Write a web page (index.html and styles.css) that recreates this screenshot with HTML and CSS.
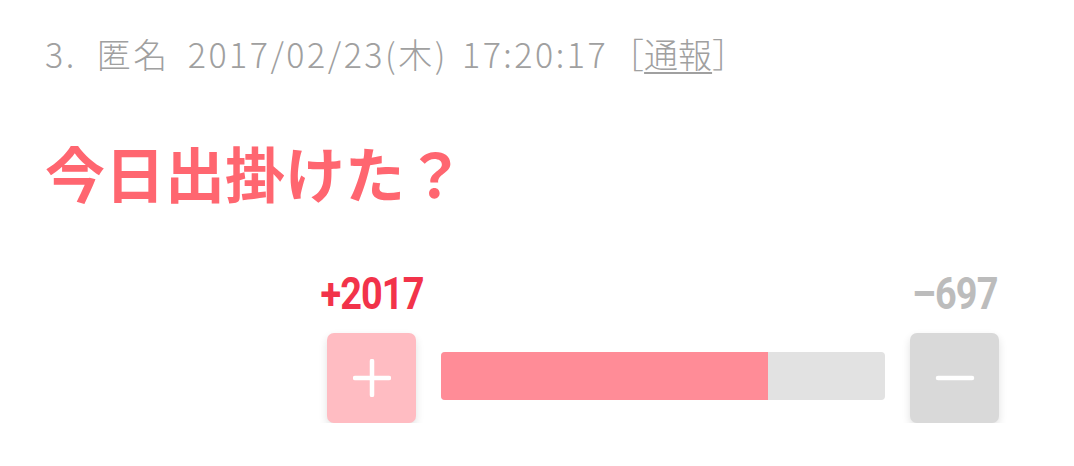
FILE: index.html
```html
<!DOCTYPE html>
<html lang="ja">
<head>
<meta charset="utf-8">
<link rel="stylesheet" href="styles.css">
</head>
<body>
<div class="post">
  <div class="meta">
    <span class="num">3.</span>
    <span class="name">匿名</span>
    <span class="date">2017/02/23(木)</span>
    <span class="time">17:20:17</span>
    <span class="report">［<span class="report-link">通報</span>］</span>
  </div>
  <h1 class="title">今日出掛けた？</h1>
  <div class="vote">
    <div class="vote-side">
      <div class="count count-plus"><span class="count-text">+2017</span></div>
      <button class="btn btn-plus" aria-label="plus">
        <svg width="38" height="38" viewBox="0 0 38 38"><path d="M19 2V36M2 19H36" stroke="#fff" stroke-width="4.5" stroke-linecap="round" fill="none"/></svg>
      </button>
    </div>
    <div class="bar"><div class="bar-fill" style="width:73.6%"></div></div>
    <div class="vote-side">
      <div class="count count-minus"><span class="count-text">–697</span></div>
      <button class="btn btn-minus" aria-label="minus">
        <svg width="40" height="10" viewBox="0 0 40 10"><path d="M3 5H37" stroke="#fff" stroke-width="4.5" stroke-linecap="round" fill="none"/></svg>
      </button>
    </div>
  </div>
</div>
</body>
</html>
```
FILE: styles.css
```css
html, body {
  margin: 0;
  padding: 0;
  background: #fff;
}
.post {
  padding: 30px 75px 0 45px;
  font-family: "Noto Sans CJK JP", "Noto Sans", sans-serif;
}
.meta {
  display: flex;
  align-items: baseline;
  font-size: 34px;
  font-weight: 300;
  letter-spacing: 2.5px;
  color: #a0a0a0;
  line-height: 48px;
  white-space: nowrap;
}
.meta .num { margin-right: 20px; }
.meta .name { margin-right: 18px; }
.meta .date { margin-right: 14px; }
.meta .time { margin-right: 2px; }
.meta .report { letter-spacing: 0; }
.report-link {
  text-decoration: underline;
  text-underline-offset: 4px;
  text-decoration-thickness: 2px;
}
.title {
  margin: 52px 0 0 0;
  font-size: 60px;
  line-height: 84px;
  font-weight: 700;
  color: #ff6670;
}
.vote {
  display: flex;
  justify-content: flex-end;
  align-items: flex-end;
  gap: 25px;
  margin-top: 56px;
}
.vote-side {
  display: flex;
  flex-direction: column;
  align-items: center;
  width: 89px;
}
.count {
  height: 48px;
  margin-bottom: 15px;
  display: flex;
  align-items: center;
  justify-content: center;
  font-family: "Roboto", "Liberation Sans", sans-serif;
  font-weight: 700;
  font-size: 44px;
  line-height: 48px;
  letter-spacing: -1px;
  white-space: nowrap;
}
.count-text {
  display: inline-block;
  transform: scaleX(0.86);
}
.count-plus { color: #f2334a; }
.count-minus { color: #bcbcbc; }
.btn {
  width: 89px;
  height: 90px;
  border: none;
  border-radius: 7px;
  padding: 0;
  display: flex;
  align-items: center;
  justify-content: center;
  box-shadow: 0 4px 8px rgba(0,0,0,0.12);
}
.btn-plus { background: #ffbcc2; }
.btn-minus { background: #d9d9d9; }
.bar {
  flex: 0 0 444px;
  height: 48px;
  margin-bottom: 23px;
  background: #e2e2e2;
  border-radius: 4px;
  overflow: hidden;
}
.bar-fill {
  height: 100%;
  background: #ff8c97;
}
```
